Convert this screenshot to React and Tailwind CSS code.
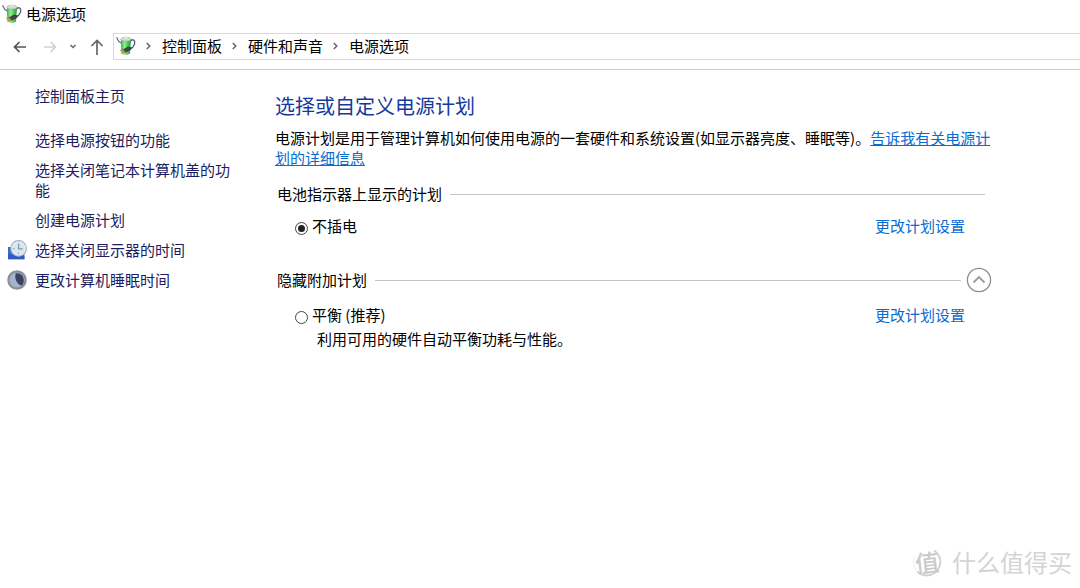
import { useState } from "react";

function PowerIcon() {
  return (
    <svg className="h-5 w-5 shrink-0" viewBox="0 0 20 20" aria-hidden="true">
      <defs>
        <linearGradient id="battery" x1="0" x2="1">
          <stop offset="0" stopColor="#35a843" />
          <stop offset="0.35" stopColor="#8df08e" />
          <stop offset="0.65" stopColor="#4fd257" />
          <stop offset="1" stopColor="#27903a" />
        </linearGradient>
      </defs>
      <path d="M0.6 1.2 L1.8 3.8 Q2.6 6.2 5.4 7.2" fill="none" stroke="#6b7190" strokeWidth="1.3" />
      <path d="M14.4 5.4 Q15.6 3 17.6 4 Q19.4 5 18.4 8.4 Q17.4 11.6 14 13" fill="none" stroke="#55587a" strokeWidth="1.3" />
      <path d="M4.8 3 L5.4 17.6 Q9.8 20.4 14 17.6 L15 3 Z" fill="url(#battery)" />
      <ellipse cx="9.9" cy="3.2" rx="5.1" ry="1.9" fill="#d3e2d8" stroke="#8a9c93" strokeWidth="0.5" />
      <ellipse cx="9.9" cy="1.9" rx="2.4" ry="1" fill="#f7faf9" stroke="#a3adb0" strokeWidth="0.4" />
      <path d="M7.4 13.2 L12 10.4 L16 11.4 L14.8 14 L9.8 16.6 Z" fill="#43404a" />
      <path d="M4.2 14.6 L7.4 13.4 M6 17.2 L9.2 15.8" stroke="#c19a55" strokeWidth="1.3" />
      <path d="M6.8 12.8 L9.6 16.6" stroke="#7a6652" strokeWidth="1.3" />
    </svg>
  );
}

function ClockIcon() {
  return (
    <svg className="h-5 w-5 shrink-0" viewBox="0 0 20 20" aria-hidden="true">
      <path d="M1 7 L17.4 7 V19.2 H1 Z" fill="#3c6ad0" />
      <path d="M1 14 L17.4 16 V19.2 H1 Z" fill="#3159c4" />
      <circle cx="11.6" cy="8.4" r="7.8" fill="#e6eff3" stroke="#a3b4c0" strokeWidth="1.2" />
      <circle cx="11.6" cy="8.4" r="5.8" fill="#d5e6ee" />
      <path d="M11.6 3.4 V8.8 H15.6" fill="none" stroke="#7d96a6" strokeWidth="1.2" />
      <path d="M5.8 8.6 H7.4 M11.6 12.6 V14.2" stroke="#8ba0ac" strokeWidth="1" />
    </svg>
  );
}

function MoonIcon() {
  return (
    <svg className="h-5 w-5 shrink-0" viewBox="0 0 20 20" aria-hidden="true">
      <defs>
        <linearGradient id="moon" x1="0" x2="1" y1="0" y2="1">
          <stop offset="0" stopColor="#8d9099" />
          <stop offset="1" stopColor="#75819b" />
        </linearGradient>
      </defs>
      <circle cx="10" cy="10" r="9" fill="url(#moon)" stroke="#8f9091" strokeWidth="1.6" />
      <circle cx="10" cy="10" r="7.6" fill="#a5b3cf" />
      <path d="M8.6 3.4 Q12.4 2.4 15 5.2 Q17.6 8.4 16.4 13 Q15.8 15 14.4 15.8 Q10.4 14.2 9 10.6 Q7.6 7 8.6 3.4 Z" fill="#39435e" />
    </svg>
  );
}

function Arrow({ d, className, weight = 1.7 }) {
  return (
    <svg className={className} viewBox="0 0 16 16" fill="none" stroke="currentColor" strokeWidth={weight} aria-hidden="true">
      <path d={d} />
    </svg>
  );
}

function Separator() {
  return (
    <svg className="h-2 w-[5px] shrink-0 text-[#666]" viewBox="0 0 5 8" fill="none" stroke="currentColor" strokeWidth="1.5" aria-hidden="true">
      <path d="M0.8 1 L3.8 4 L0.8 7" />
    </svg>
  );
}

const tasks = [
  { label: "选择电源按钮的功能" },
  { label: "选择关闭笔记本计算机盖的功能" },
  { label: "创建电源计划" },
  { label: "选择关闭显示器的时间", Icon: ClockIcon },
  { label: "更改计算机睡眠时间", Icon: MoonIcon },
];

function Plan({ id, label, description, checked, onSelect }) {
  return (
    <div className="pr-[27px] pl-5">
      <div className="flex items-center justify-between">
        <div className="flex items-center gap-1">
          <input
            type="radio"
            name="plan"
            id={id}
            checked={checked}
            onChange={onSelect}
            className="mt-1 grid h-[13px] w-[13px] appearance-none place-content-center rounded-full border border-[#444] bg-white before:h-[7px] before:w-[7px] before:rounded-full checked:before:bg-[#222]"
          />
          <label htmlFor={id}>{label}</label>
        </div>
        <a href="#settings" className="text-[#0b6bd0]">更改计划设置</a>
      </div>
      {description && <p className="mt-1 pl-[22px]">{description}</p>}
    </div>
  );
}

export default function App() {
  const [plan, setPlan] = useState("unplugged");
  const [open, setOpen] = useState(true);
  return (
    <div className="relative flex min-h-screen flex-col bg-white font-['Noto_Sans_CJK_SC',sans-serif] text-[15px] leading-5 text-black">
      <header className="border-b border-[#c9c9c9] pb-[9px]">
        <div className="flex h-[33px] items-start gap-1 pt-1 pl-[2px]">
          <PowerIcon />
          <h1>电源选项</h1>
        </div>
        <nav className="flex items-center" aria-label="导航">
          <div className="flex w-[113px] shrink-0 items-center pl-3">
            <button type="button" aria-label="后退" className="text-[#555]">
              <Arrow className="h-4 w-4" d="M14 8 H2.5 M7.5 3 L2.5 8 L7.5 13" />
            </button>
            <button type="button" aria-label="前进" className="ml-[14px] text-[#d2d2d2]">
              <Arrow className="h-4 w-4" d="M2 8 H13.5 M8.5 3 L13.5 8 L8.5 13" />
            </button>
            <button type="button" aria-label="最近的位置" className="ml-[11px] text-[#666]">
              <Arrow className="h-2 w-2" weight={3} d="M3 4 L8 9 L13 4" />
            </button>
            <button type="button" aria-label="上移" className="ml-3 text-[#666]">
              <Arrow className="h-4 w-4" d="M8 16 V1.5 M2.5 7 L8 1.5 L13.5 7" />
            </button>
          </div>
          <div className="flex h-[27px] flex-1 items-center border-y border-l border-[#d9d9d9] pb-[2px] pl-[2px]">
            <PowerIcon />
            <ol className="flex items-center">
              {["控制面板", "硬件和声音", "电源选项"].map((name) => (
                <li key={name} className="flex items-center gap-[11px] pl-[10px]">
                  <Separator />
                  <a href="#path">{name}</a>
                </li>
              ))}
            </ol>
          </div>
        </nav>
      </header>

      <div className="flex flex-1 items-start">
        <aside className="w-[240px] shrink-0 pt-4 pl-[7px] text-[#1c1c5e]">
          <a href="#home" className="ml-7 block">控制面板主页</a>
          <ul className="mt-6 flex flex-col gap-[10px]">
            {tasks.map(({ label, Icon }) => (
              <li key={label} className="flex gap-2">
                {Icon ? <Icon /> : <span className="w-5 shrink-0" />}
                <a href="#task">{label}</a>
              </li>
            ))}
          </ul>
        </aside>

        <main className="mr-[88px] ml-[35px] max-w-[717px] flex-1 pt-[22px]">
          <h2 className="text-[20px] leading-7 text-[#153a9c]">选择或自定义电源计划</h2>
          <p className="mt-2">
            电源计划是用于管理计算机如何使用电源的一套硬件和系统设置(如显示器亮度、睡眠等)。
            <a href="#help" className="text-[#0b6bd0] underline">告诉我有关电源计划的详细信息</a>
          </p>

          <section className="mt-4">
            <div className="flex items-center gap-2 pr-[7px] pl-[2px]">
              <h3>电池指示器上显示的计划</h3>
              <hr className="flex-1 border-[#c4c4c4]" />
            </div>
            <div className="mt-3">
              <Plan id="unplugged" label="不插电" checked={plan === "unplugged"} onSelect={() => setPlan("unplugged")} />
            </div>
          </section>

          <section className="mt-[31px]">
            <div className="flex items-center pl-[2px]">
              <h3>隐藏附加计划</h3>
              <hr className="mr-[5px] ml-2 flex-1 border-[#c4c4c4]" />
              <button type="button" aria-label="隐藏附加计划" aria-expanded={open} onClick={() => setOpen(!open)}>
                <svg className="h-[26px] w-[26px]" viewBox="0 0 26 26" fill="none" aria-hidden="true">
                  <circle cx="13" cy="13" r="11.6" stroke="#8c8c8c" strokeWidth="1.3" />
                  <path d="M7.5 15.5 L13 10 L18.5 15.5" stroke="#999" strokeWidth="1.8" />
                </svg>
              </button>
            </div>
            {open && (
              <div className="mt-3">
                <Plan
                  id="balanced"
                  label="平衡 (推荐)"
                  description="利用可用的硬件自动平衡功耗与性能。"
                  checked={plan === "balanced"}
                  onSelect={() => setPlan("balanced")}
                />
              </div>
            )}
          </section>
        </main>
      </div>

      <div className="absolute right-2 bottom-[10px] flex items-center gap-[10px] text-[24px] leading-8 text-[#d4d4d4]">
        <span className="relative flex h-[30px] w-[30px] items-center justify-center text-[24px]">
          <svg className="absolute inset-0" viewBox="0 0 30 30" fill="none" aria-hidden="true">
            <path d="M22 3.4 A13.6 13.6 0 1 1 5 24.4" stroke="#d0d0d0" strokeWidth="1.8" />
            <path d="M4 23 A13.6 13.6 0 0 1 3 9" stroke="#ececec" strokeWidth="1" />
          </svg>
          <span className="-rotate-6 font-medium text-[#cacaca]">值</span>
        </span>
        <span>什么值得买</span>
      </div>
    </div>
  );
}
